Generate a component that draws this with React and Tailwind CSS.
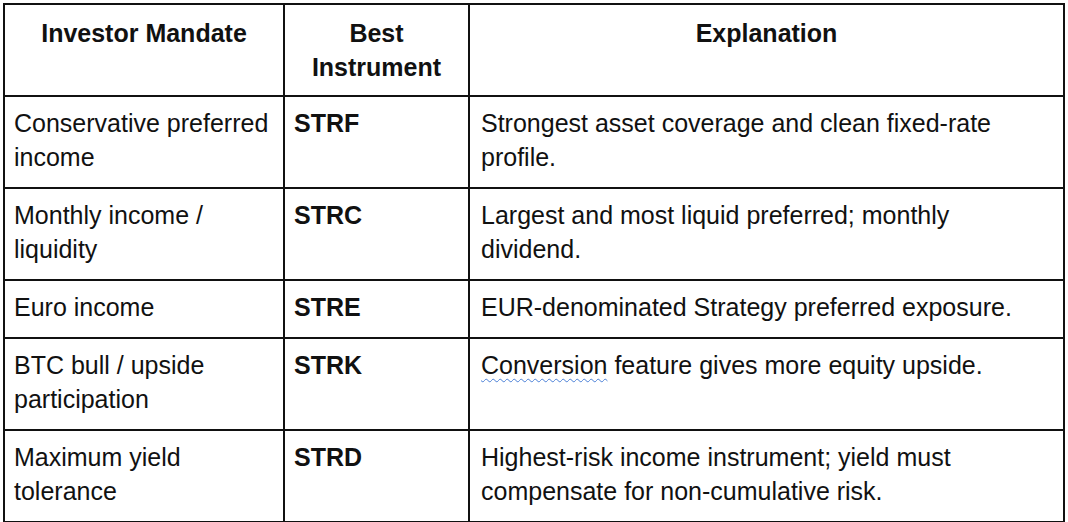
export default function App() {
  const rows = [
    ["Conservative preferred income", "STRF", "Strongest asset coverage and clean fixed-rate profile."],
    ["Monthly income / liquidity", "STRC", "Largest and most liquid preferred; monthly dividend."],
    ["Euro income", "STRE", "EUR-denominated Strategy preferred exposure."],
    ["BTC bull / upside participation", "STRK", null],
    ["Maximum yield tolerance", "STRD", "Highest-risk income instrument; yield must compensate for non-cumulative risk."],
  ];
  const cell = "border-2 border-[#111] align-top pl-[9px] pr-[8px] pt-[9px] pb-[13px]";
  const head = "border-2 border-[#111] align-top font-bold text-center px-[10px] pt-[11px] pb-[11px]";
  return (
    <div className="w-[1068px] h-[522px] bg-white pl-[3px] pt-[3px] text-[#111] text-[25px] leading-[34px]" style={{ fontFamily: '"Liberation Sans", Arial, sans-serif' }}>
      <table className="table-fixed border-collapse w-[1060px]">
        <colgroup>
          <col className="w-[280px]" />
          <col className="w-[185px]" />
          <col className="w-[595px]" />
        </colgroup>
        <thead>
          <tr>
            <th className={head}>Investor Mandate</th>
            <th className={head}>Best Instrument</th>
            <th className={head}>Explanation</th>
          </tr>
        </thead>
        <tbody>
          {rows.map((r, i) => (
            <tr key={i}>
              <td className={cell}>{r[0]}</td>
              <td className={cell + " font-bold"}>{r[1]}</td>
              <td className={cell + " pl-[11px]"}>
                {r[2] === null ? (
                  <>
                    <span className="underline decoration-wavy decoration-[#4a7fd6] decoration-1 underline-offset-[4px]">Conversion</span> feature gives more equity upside.
                  </>
                ) : (
                  r[2]
                )}
              </td>
            </tr>
          ))}
        </tbody>
      </table>
    </div>
  );
}
